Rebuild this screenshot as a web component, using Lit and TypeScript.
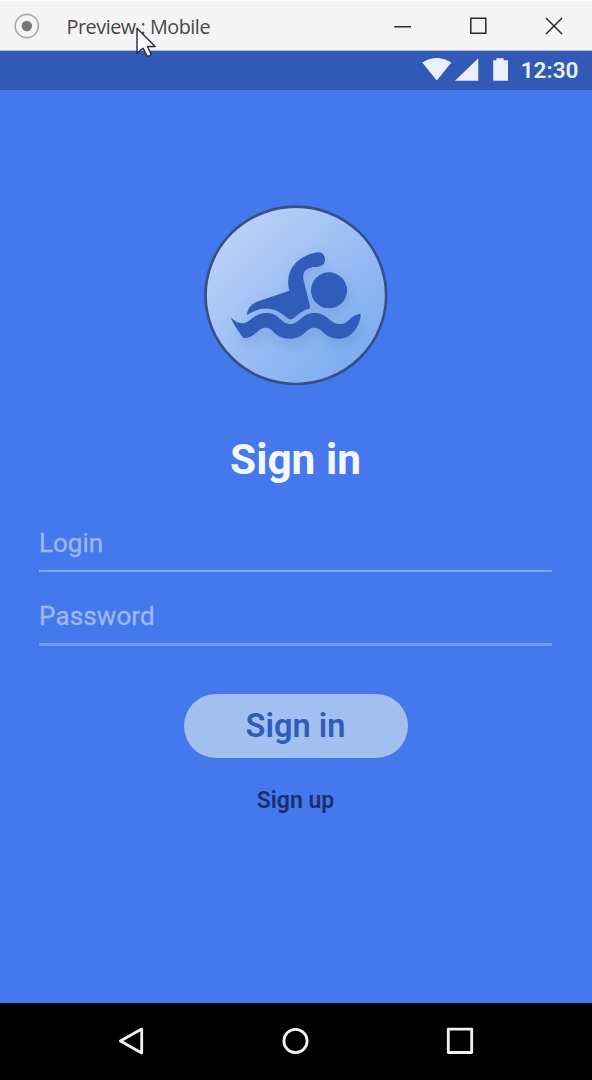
import { LitElement, html, css } from "lit";
import { customElement } from "lit/decorators.js";

@customElement("window-bar")
class WindowBar extends LitElement {
  static styles = css`
    :host { display: flex; align-items: center; height: 51px; box-sizing: border-box; background: #f4f4f4; border-top: 1px solid #fcfcfc; border-bottom: 1px solid #b4bccd; padding: 0 27px 0 14px; }
    .mark { width: 26px; height: 26px; flex: none; }
    .title { flex: 1; margin-left: 26.5px; padding-top: 2px; font: 400 19.8px/28px "Open Sans", sans-serif; letter-spacing: -0.45px; color: #484848; white-space: nowrap; }
    .controls { display: block; width: 174px; height: 20px; flex: none; }
  `;
  render() {
    return html`
      <svg class="mark" viewBox="0 0 26 26"><circle cx="12.8" cy="13" r="11.6" fill="none" stroke="#a9a9a9" stroke-width="1.6"/><circle cx="12.8" cy="13" r="5.2" fill="#777"/></svg>
      <span class="title">Preview : Mobile</span>
      <svg class="controls" viewBox="0 0 174 20" fill="none" stroke="#282828" stroke-width="1.5"><path d="M3.3 10.7H20M79.8 2.3h15v15h-15zM155 2l16 16M171 2l-16 16"/></svg>
    `;
  }
}

@customElement("status-bar")
class StatusBar extends LitElement {
  static styles = css`
    :host { display: flex; height: 38.5px; align-items: center; justify-content: flex-end; padding-right: 13.5px; background: #305ab6; }
    .icons { width: 88px; height: 24px; margin-right: 11px; }
    .time { padding-top: 2px; font: 600 22.6px/36px Roboto, sans-serif; color: #e9effb; }
  `;
  render() {
    return html`
      <svg class="icons" viewBox="0 0 88 24" fill="#e9effb"><path d="M.2 4.4Q14.8-4.5 29.4 4.4L14.8 22.5zM33 22.8 56.3.3v22.5zM71.2 2.2h3.2V.3h7.2v1.9H86v20.6H71.2z"/></svg>
      <span class="time">12:30</span>
    `;
  }
}

@customElement("swim-logo")
class SwimLogo extends LitElement {
  static styles = css`
    :host { display: block; width: 184px; height: 181px; }
    .art { display: block; width: 184px; height: 181px; }
  `;
  render() {
    return html`
      <svg class="art" viewBox="27 29 552 543">
        <defs>
          <linearGradient id="disc" x1="0.15" y1="0.15" x2="0.85" y2="0.85"><stop offset="0" stop-color="#b9cff7"/><stop offset="1" stop-color="#7eaef1"/></linearGradient>
          <filter id="shade" x="-20%" y="-20%" width="150%" height="160%"><feDropShadow dx="8" dy="20" stdDeviation="20" flood-color="#4776bd" flood-opacity="0.3"/></filter>
        </defs>
        <ellipse cx="302.5" cy="300" rx="271" ry="266" fill="url(#disc)" stroke="#344f8a" stroke-width="8"/>
        <g fill="#305bba" filter="url(#shade)">
          <circle cx="402" cy="285" r="54"/>
          <path d="M155 359C159 337 169 326 190 318L283 286C277 263 279 238 290 219C305 193 335 177 366 171C381 169 390 180 390 192C390 205 383 213 369 214C344 214 326 223 325 239C324 248 326 257 328 263L345 333C346 338 342 341 337 342C319 347 307 361 292 371C286 374 281 371 277 368C260 354 246 342 220 340C193 338 178 349 155 359Z"/>
          <path d="M107 366C120 379 135 388 151 382C171 375 179 353 216 353C252 353 258 386 286 386C314 386 320 353 358 353C398 353 404 386 434 386C464 386 465 357 497 355C498 377 484 404 467 418C449 434 411 434 391 417C377 403 369 397 357 397C333 397 328 430 284 430C239 430 235 397 212 397C188 397 184 425 147 429C139 422 114 386 107 366Z"/>
        </g>
      </svg>
    `;
  }
}

@customElement("sign-in-form")
class SignInForm extends LitElement {
  static styles = css`
    :host { display: flex; flex: 1; flex-direction: column; align-items: center; background: #4478ec; padding: 115px 40px 0 39px; font-family: Roboto, sans-serif; }
    .heading { margin: 49.5px 0 0; font-size: 42.4px; line-height: 50px; font-weight: 700; color: #f4f7fe; }
    .field { width: 100%; box-sizing: border-box; font-size: 26px; line-height: 30px; color: #9cb9f6; -webkit-text-stroke: 0.3px #9cb9f6; }
    .first { height: 43.5px; margin-top: 43px; border-bottom: 2px solid #83a8f3; }
    .second { height: 45px; margin-top: 29px; border-bottom: 3px solid #7199f1; letter-spacing: 0.12px; }
    .submit { width: 224px; height: 64px; margin-top: 48.5px; padding: 1px 0 0; border: 0; border-radius: 32px; background: #a1bfef; color: #305bb9; font: 600 32.6px/63px Roboto, sans-serif; }
    .link { margin-top: 27.5px; font-size: 23px; line-height: 30px; font-weight: 600; color: #18306b; }
  `;
  render() {
    return html`
      <swim-logo></swim-logo>
      <h1 class="heading">Sign in</h1>
      <div class="field first">Login</div>
      <div class="field second">Password</div>
      <button class="submit">Sign in</button>
      <span class="link">Sign up</span>
    `;
  }
}

@customElement("nav-bar")
class NavBar extends LitElement {
  static styles = css`
    :host { display: flex; justify-content: space-between; align-items: center; height: 77.5px; box-sizing: border-box; padding: 0 118px; background: #000; }
    .icon { width: 28px; height: 28px; fill: none; stroke: #f2f2f2; stroke-width: 2.8; stroke-linejoin: round; }
  `;
  render() {
    return html`
      <svg class="icon" viewBox="0 0 28 28"><path d="M2.4 14 23.7 2v24z"/></svg>
      <svg class="icon" viewBox="0 0 28 28"><circle cx="13.5" cy="14" r="11.6"/></svg>
      <svg class="icon" viewBox="0 0 28 28"><path d="M2.3 2.2h23.4v23.3H2.3z"/></svg>
    `;
  }
}

@customElement("app-root")
class AppRoot extends LitElement {
  static styles = css`
    :host { display: flex; flex-direction: column; position: relative; height: 1080px; overflow: hidden; }
    .pointer { position: absolute; left: 135px; top: 26px; width: 24px; height: 34px; }
  `;
  render() {
    return html`
      <window-bar></window-bar>
      <status-bar></status-bar>
      <sign-in-form></sign-in-form>
      <nav-bar></nav-bar>
      <svg class="pointer" viewBox="0 0 24 34"><path d="M2 2.2V27.3L8 22.2 12.5 30.5 16.2 28.5 12.5 20.5H20.2Z" fill="#fff" stroke="#252a3c" stroke-width="1.4" stroke-linejoin="round"/></svg>
    `;
  }
}
